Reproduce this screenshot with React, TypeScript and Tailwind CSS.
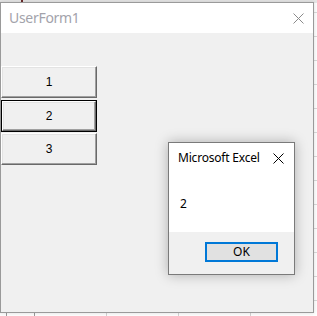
import React from "react";

function ClassicButton({ label, focused }: { label: string; focused?: boolean }) {
  const inner = (
    <div className="flex-1 flex items-center justify-center bg-[#f0f0f0] border-t border-l border-t-white border-l-white border-r border-b border-r-[#696969] border-b-[#696969] shadow-[inset_-1px_-1px_0_#a0a0a0,inset_1px_1px_0_#e3e3e3]">
      <span className="text-[12px] text-black leading-none" style={{ fontFamily: '"Liberation Sans", Arial, sans-serif' }}>
        {label}
      </span>
    </div>
  );
  if (focused) {
    return <div className="flex w-[96px] h-[32px] border border-black">{inner}</div>;
  }
  return <div className="flex w-[96px] h-[32px]">{inner}</div>;
}

export default function App() {
  const cols = [7, 28, 72, 72, 72, 72];
  const rows = [13, 24, 24, 24, 24, 24, 24, 24, 24, 24, 24, 24, 24, 24];
  return (
    <div className="relative w-[317px] h-[316px] bg-white overflow-hidden" style={{ fontFamily: '"Noto Sans", "Open Sans", sans-serif' }}>
      {/* spreadsheet grid behind */}
      <div className="absolute inset-0 flex">
        {cols.map((w, i) => (
          <div
            key={i}
            className={`shrink-0 h-full border-r ${i < 2 ? "border-r-[#9b9b9b]" : "border-r-[#d4d4d4]"}`}
            style={{ width: w }}
          />
        ))}
      </div>
      <div className="absolute inset-0 flex flex-col">
        {rows.map((h, i) => (
          <div key={i} className="shrink-0 w-full border-b border-b-[#dadada]" style={{ height: h }} />
        ))}
      </div>
      <div className="absolute left-0 top-0 w-full h-[3px] bg-[#e6e6e6]" />
      <div className="absolute left-[21px] top-0 w-[2px] h-[2px] bg-[#6b2a2a]" />
      <div className="absolute left-0 top-[50px] w-[2px] h-[13px] bg-[#8b2020]" />

      {/* UserForm window */}
      <div className="absolute left-0 top-[2px] w-[314px] h-[311px] border border-[#9a9a9a] bg-[#f0f0f0] flex flex-col shadow-[0_0_4px_rgba(0,0,0,0.15)]">
        <div className="h-[30px] bg-white flex items-center justify-between pl-[8px] pr-[9px] shrink-0">
          <span className="text-[14px] text-[#a3a3ab] leading-none tracking-[-0.3px]">UserForm1</span>
          <svg width="11" height="11" viewBox="0 0 11 11" className="mt-[1px]">
            <path d="M0.5 0.5 L10.5 10.5 M10.5 0.5 L0.5 10.5" stroke="#8a8a8a" strokeWidth="1" fill="none" />
          </svg>
        </div>
        <div className="flex flex-col pt-[33px] pl-[0px]">
          <ClassicButton label="1" />
          <div className="mt-[2px]">
            <ClassicButton label="2" focused />
          </div>
          <div className="mt-[1px]">
            <ClassicButton label="3" />
          </div>
        </div>
      </div>

      {/* MsgBox */}
      <div className="absolute left-[168px] top-[142px] w-[127px] h-[133px] border border-[#7a7a7a] bg-white flex flex-col shadow-[0_0_12px_rgba(0,0,0,0.28)]">
        <div className="h-[30px] flex items-center justify-between pl-[9px] pr-[10px] shrink-0">
          <span className="text-[12px] text-black leading-none tracking-[-0.2px]">Microsoft Excel</span>
          <svg width="11" height="11" viewBox="0 0 11 11">
            <path d="M0.5 0.5 L10.5 10.5 M10.5 0.5 L0.5 10.5" stroke="#000" strokeWidth="1" fill="none" />
          </svg>
        </div>
        <div className="flex-1 bg-white pl-[11px] pt-[17px]">
          <span className="text-[12px] text-black leading-none">2</span>
        </div>
        <div className="h-[42px] bg-[#f0f0f0] flex items-start justify-end pr-[16px] pt-[10px] shrink-0">
          <div className="w-[73px] h-[20px] border-2 border-[#0078d7] bg-[#e1e1e1] flex items-center justify-center">
            <span className="text-[12px] text-black leading-none">OK</span>
          </div>
        </div>
      </div>
    </div>
  );
}
